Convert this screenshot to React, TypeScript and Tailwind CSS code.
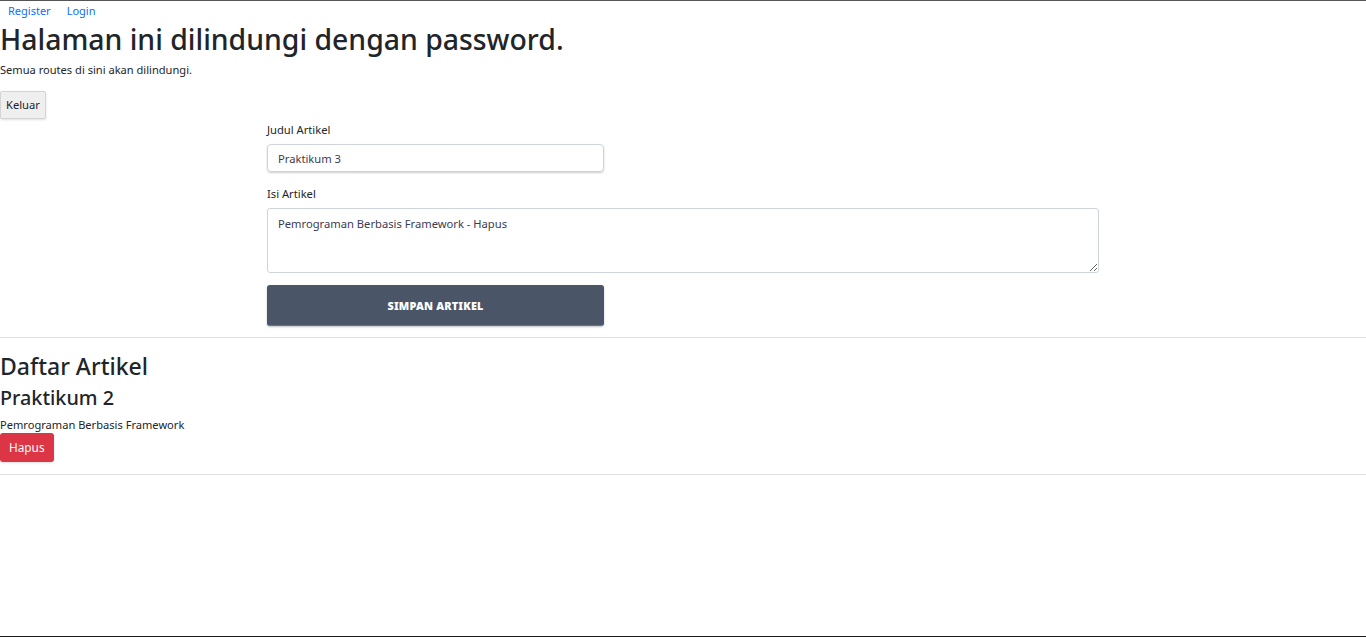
export default function App() {
  return (
    <div className="h-[637px] w-[1366px] overflow-hidden flex flex-col bg-white text-[#212529] font-['Noto_Sans',sans-serif] border-t border-[#555] border-b border-b-[#1a1a1a]">
      <div className="flex-1">
        <nav className="flex gap-[16px] px-2 h-[20px] items-center text-[11px] text-[#0d6efd]">
          <a href="#">Register</a>
          <a href="#">Login</a>
        </nav>
        <h1 className="text-[28.4px] font-medium leading-[36px] mb-[3px]">Halaman ini dilindungi dengan password.</h1>
        <p className="text-[11.1px] leading-[19px] mb-[12px]">Semua routes di sini akan dilindungi.</p>
        <button className="h-[28px] px-[5px] text-[11.2px] bg-[#efefef] border border-[#d4d4d4] rounded-[2px] shadow-sm">Keluar</button>

        <form className="w-[832px] ml-[267px] mt-[1px]">
          <label className="block text-[11.2px] leading-[19px] mb-[5px]">Judul Artikel</label>
          <input
            className="block w-[337px] h-[28px] px-[10px] text-[11.2px] text-[#3b3b50] border border-[#ced4da] rounded-[4px] shadow-[0_1px_2px_rgba(0,0,0,0.2)]"
            defaultValue="Praktikum 3"
          />
          <label className="block text-[11.2px] leading-[19px] mt-[12px] mb-[5px]">Isi Artikel</label>
          <textarea
            className="block w-[832px] h-[65px] px-[10px] py-[6px] text-[11.2px] leading-[18px] text-[#3b3b50] border border-[#ced4da] rounded-[3px]"
            defaultValue="Pemrograman Berbasis Framework - Hapus"
          />
          <button className="mt-[12px] w-[337px] h-[41px] bg-[#4b5568] text-white text-[10.8px] font-black tracking-[0.2px] rounded-[3px] border border-[#2f7ff7] border-t-[#4b5568] border-x-[#4b5568] shadow-[0_1px_2px_rgba(0,0,0,0.25)]">
            SIMPAN ARTIKEL
          </button>
        </form>

        <hr className="mt-[11px] border-[#e0e0e0]" />

        <h2 className="text-[23px] font-medium leading-[30px] mt-[13px]">Daftar Artikel</h2>
        <h3 className="text-[19.8px] font-medium leading-[28px] mt-[3px]">Praktikum 2</h3>
        <p className="text-[11.1px] leading-[17px] mt-[4px]">Pemrograman Berbasis Framework</p>
        <button className="h-[29px] px-[9px] text-[11.8px] text-white bg-[#dc3545] rounded-[3px] shadow-sm">Hapus</button>
        <hr className="mt-[12px] border-[#e0e0e0]" />
      </div>
    </div>
  );
}
